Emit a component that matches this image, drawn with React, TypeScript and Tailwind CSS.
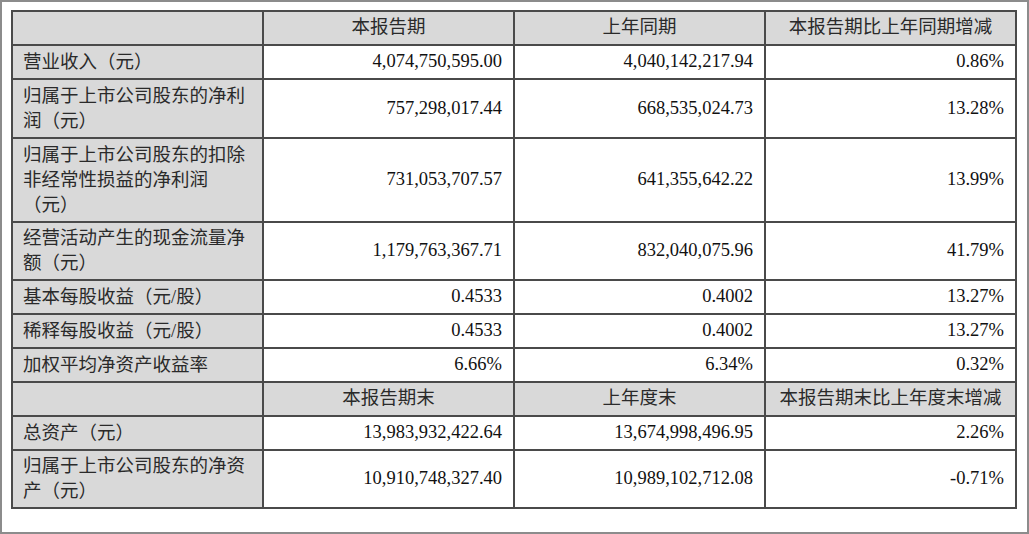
import { ReactNode } from 'react'

interface RowProps {
  label?: ReactNode
  values: string[]
  height: string
  header?: boolean
}

const rows: RowProps[] = [
  { values: ['本报告期', '上年同期', '本报告期比上年同期增减'], height: 'h-[34px]', header: true },
  { label: '营业收入（元）', values: ['4,074,750,595.00', '4,040,142,217.94', '0.86%'], height: 'h-[34px]' },
  {
    label: (
      <>
        归属于上市公司股东的净利
        <br />
        润（元）
      </>
    ),
    values: ['757,298,017.44', '668,535,024.73', '13.28%'],
    height: 'h-[59px]',
  },
  {
    label: (
      <>
        归属于上市公司股东的扣除
        <br />
        非经常性损益的净利润
        <br />
        （元）
      </>
    ),
    values: ['731,053,707.57', '641,355,642.22', '13.99%'],
    height: 'h-[84px]',
  },
  {
    label: (
      <>
        经营活动产生的现金流量净
        <br />
        额（元）
      </>
    ),
    values: ['1,179,763,367.71', '832,040,075.96', '41.79%'],
    height: 'h-[58px]',
  },
  { label: '基本每股收益（元/股）', values: ['0.4533', '0.4002', '13.27%'], height: 'h-[34px]' },
  { label: '稀释每股收益（元/股）', values: ['0.4533', '0.4002', '13.27%'], height: 'h-[34px]' },
  { label: '加权平均净资产收益率', values: ['6.66%', '6.34%', '0.32%'], height: 'h-[34px]' },
  { values: ['本报告期末', '上年度末', '本报告期末比上年度末增减'], height: 'h-[34px]', header: true },
  { label: '总资产（元）', values: ['13,983,932,422.64', '13,674,998,496.95', '2.26%'], height: 'h-[34px]' },
  {
    label: (
      <>
        归属于上市公司股东的净资
        <br />
        产（元）
      </>
    ),
    values: ['10,910,748,327.40', '10,989,102,712.08', '-0.71%'],
    height: 'h-[58px]',
  },
]

const cell = 'border-r-2 border-b-2 border-[#4a4a4a] flex items-center'

const Row = ({ label, values, height, header }: RowProps) => {
  return (
    <>
      <div className={`${cell} ${height} bg-[#d9d9d9] px-[10px] leading-[25px] text-[#2a2a2a]`}>
        {label}
      </div>
      {values.map((v, i) => (
        <div
          key={i}
          className={`${cell} ${height} ${
            header
              ? 'bg-[#d9d9d9] justify-center text-[#2a2a2a]'
              : 'bg-white justify-end pr-[11px]'
          }`}
        >
          {v}
        </div>
      ))}
    </>
  )
}

export default function App() {
  return (
    <div className="w-[1029px] h-[534px] bg-white border-2 border-[#8c8c8c] pl-[9px] pt-[8px] text-[18.5px] text-[#111111] font-['Liberation_Serif','Noto_Sans_CJK_SC',serif]">
      <div className="grid grid-cols-[251px_251px_251px_251px] w-fit border-l-2 border-t-2 border-[#4a4a4a]">
        {rows.map((r, i) => (
          <Row key={i} {...r} />
        ))}
      </div>
    </div>
  )
}
